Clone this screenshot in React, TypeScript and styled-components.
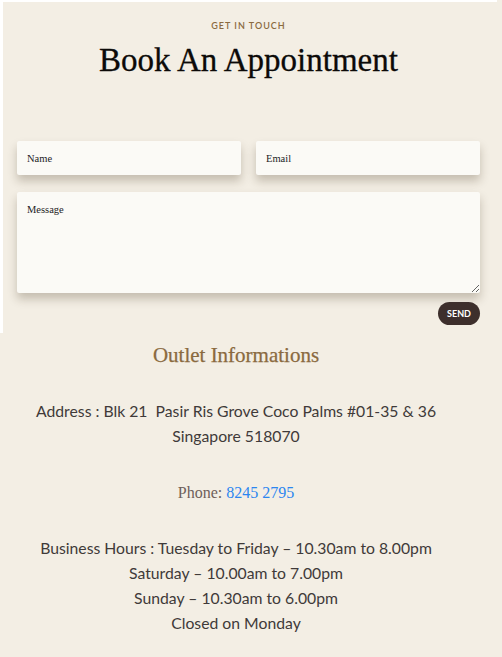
import { FC } from "react";
import styled, { createGlobalStyle } from "styled-components";

const GlobalStyle = createGlobalStyle`
  html, body {
    margin: 0;
    padding: 0;
    background: #ffffff;
  }
  * {
    box-sizing: border-box;
  }
`;

const hours = [
  "Business Hours : Tuesday to Friday – 10.30am to 8.00pm",
  "Saturday – 10.00am to 7.00pm",
  "Sunday – 10.30am to 6.00pm",
  "Closed on Monday",
];

const App: FC = () => {
  return (
    <>
      <GlobalStyle />
      <Page>
        <ContactSection>
          <Eyebrow>GET IN TOUCH</Eyebrow>
          <Heading>Book An Appointment</Heading>
          <Form onSubmit={(e) => e.preventDefault()}>
            <FieldRow>
              <Input type="text" placeholder="Name" />
              <Input type="email" placeholder="Email" />
            </FieldRow>
            <TextArea placeholder="Message" />
            <Actions>
              <SendButton type="submit">SEND</SendButton>
            </Actions>
          </Form>
        </ContactSection>
        <OutletSection>
          <OutletTitle>Outlet Informations</OutletTitle>
          <InfoBlock>
            <InfoLine>Address : Blk 21&nbsp; Pasir Ris Grove Coco Palms #01-35 &amp; 36</InfoLine>
            <InfoLine>Singapore 518070</InfoLine>
          </InfoBlock>
          <Phone>
            Phone: <PhoneLink href="tel:82452795">8245 2795</PhoneLink>
          </Phone>
          <InfoBlock>
            {hours.map((line) => (
              <InfoLine key={line}>{line}</InfoLine>
            ))}
          </InfoBlock>
        </OutletSection>
      </Page>
    </>
  );
};

export default App;

const Page = styled.div`
  width: 502px;
  min-height: 657px;
  display: flex;
  flex-direction: column;
  background: #f3eee4;
`;

const ContactSection = styled.section`
  margin: 2px 2px 0 3px;
  padding: 18px 20px 10px 14px;
  background: #f3eee4;
  display: flex;
  flex-direction: column;
  align-items: center;
  box-shadow: -3px -2px 0 #ffffff;
`;

const Eyebrow = styled.div`
  font-family: Lato, "Liberation Sans", sans-serif;
  font-size: 9px;
  font-weight: 600;
  letter-spacing: 1px;
  line-height: 12px;
  color: #8a6a3f;
`;

const Heading = styled.h1`
  margin: 8px 0 0;
  font-family: "Liberation Serif", "DejaVu Serif", serif;
  font-weight: 400;
  font-size: 33px;
  line-height: 40px;
  color: #0c0a08;
  -webkit-text-stroke: 0.3px #0c0a08;
`;

const Form = styled.form`
  align-self: stretch;
  margin-top: 61px;
  display: flex;
  flex-direction: column;
`;

const FieldRow = styled.div`
  display: grid;
  grid-template-columns: 1fr 1fr;
  gap: 15px;
`;

const fieldStyles = `
  border: none;
  outline: none;
  border-radius: 2px;
  background: #fbfaf6;
  box-shadow: 0 6px 10px rgba(60, 45, 20, 0.25);
  font-family: "Liberation Serif", serif;
  font-size: 10.5px;
  color: #222;
  &::placeholder {
    color: #1d1d25;
  }
`;

const Input = styled.input`
  ${fieldStyles}
  height: 34px;
  padding: 0 10px;
  width: 100%;
`;

const TextArea = styled.textarea`
  ${fieldStyles}
  margin-top: 17px;
  height: 101px;
  padding: 12px 10px;
  resize: vertical;
  display: block;
`;

const Actions = styled.div`
  display: flex;
  justify-content: flex-end;
  margin-top: 9px;
`;

const SendButton = styled.button`
  width: 42px;
  height: 23px;
  border: none;
  border-radius: 12px;
  background: #3d2f2c;
  color: #ffffff;
  font-family: Lato, "Liberation Sans", sans-serif;
  font-size: 9px;
  font-weight: 700;
  padding: 0;
  cursor: pointer;
`;

const OutletSection = styled.section`
  flex: 1;
  padding: 7px 30px 30px 0;
  display: flex;
  flex-direction: column;
  align-items: center;
  text-align: center;
`;

const OutletTitle = styled.h2`
  margin: 0;
  font-family: "Liberation Serif", "DejaVu Serif", serif;
  font-weight: 400;
  font-size: 21px;
  line-height: 26px;
  color: #8a6a3f;
  -webkit-text-stroke: 0.25px #8a6a3f;
`;

const InfoBlock = styled.div`
  margin-top: 30px;
  display: flex;
  flex-direction: column;
`;

const InfoLine = styled.div`
  font-family: Lato, "Liberation Sans", sans-serif;
  font-size: 15.75px;
  line-height: 25.3px;
  color: #3f3a39;
`;

const Phone = styled.div`
  margin-top: 31px;
  font-family: "Liberation Serif", serif;
  font-size: 16px;
  line-height: 25px;
  color: #6e605a;
`;

const PhoneLink = styled.a`
  color: #2b86f0;
  text-decoration: none;
`;
